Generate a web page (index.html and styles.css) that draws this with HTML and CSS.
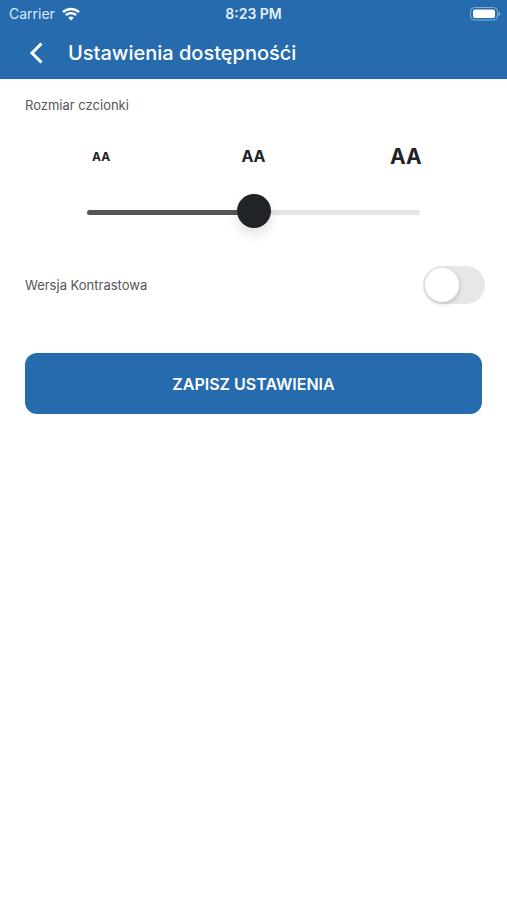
FILE: index.html
```html
<!DOCTYPE html>
<html lang="pl">

<head>
    <meta charset="utf-8">
    <meta name="viewport" content="width=device-width, initial-scale=1">
    <title>Ustawienia dostępnośći</title>
    <link rel="stylesheet" href="styles.css">
</head>

<body>

    <header class="header">
        <!-- Status bar -->
        <div class="status-bar">
            <div class="carrier">
                <span>Carrier</span>
                <svg class="wifi" viewBox="0 0 18 14" aria-hidden="true">
                    <path d="M1 5.2a11.5 11.5 0 0 1 16 0" />
                    <path d="M3.9 8.2a7.3 7.3 0 0 1 10.2 0" />
                    <path class="wifi-dot" d="M9 13.6L6.2 10.8a4 4 0 0 1 5.6 0z" />
                </svg>
            </div>
            <span class="clock">8:23 PM</span>
            <svg class="battery" viewBox="0 0 32 14" aria-hidden="true">
                <rect class="battery-frame" x="1.5" y="0.5" width="27" height="12.5" rx="4" />
                <rect class="battery-level" x="4" y="2.5" width="22" height="8.5" rx="2" />
                <path class="battery-tip" d="M29.5 4.8c2.4.8 2.4 3.4 0 4.2z" />
            </svg>
        </div>

        <!-- Title -->
        <div class="nav-bar">
            <button class="back-button" type="button" aria-label="Wstecz">
                <svg viewBox="0 0 14 22" aria-hidden="true">
                    <path d="M12.5 1.5L3 11l9.500 9.500" />
                </svg>
            </button>
            <h1>Ustawienia dostępnośći</h1>
        </div>
    </header>

    <main>
        <form class="settings">
            <!-- Font size -->
            <label class="setting-label" for="font-size">Rozmiar czcionki</label>
            <div class="sizes" aria-hidden="true">
                <span class="size-small">AA</span>
                <span class="size-medium">AA</span>
                <span class="size-large">AA</span>
            </div>
            <input class="slider" id="font-size" type="range" min="0" max="2" step="1" value="1">

            <!-- Contrast version -->
            <div class="contrast-row">
                <label class="setting-label" for="contrast">Wersja Kontrastowa</label>
                <input class="switch" id="contrast" type="checkbox" role="switch">
            </div>

            <button class="save-button" type="button">ZAPISZ USTAWIENIA</button>
        </form>
    </main>

    <script>
        // Keep the dark part of the track under the thumb
        const slider = document.getElementById('font-size');
        slider.addEventListener('input', function () {
            slider.style.setProperty('--fill', (slider.value / slider.max * 100) + '%');
        });
    </script>

</body>

</html>
```

FILE: styles.css
```css
* {
    box-sizing: border-box;
}

body {
    margin: 0;
    background: #fff;
    color: #202327;
    font-family: Inter, "Liberation Sans", sans-serif;
}

/* Header */
.header {
    background: #256bad;
    color: #fff;
}

.status-bar {
    display: grid;
    grid-template-columns: 1fr auto 1fr;
    align-items: center;
    height: 27px;
    padding: 0 6px;
    font-size: 14px;
}

.carrier {
    display: flex;
    align-items: center;
    gap: 7px;
    padding-left: 3px;
    color: #dceafa;
}

.wifi {
    width: 18px;
    height: 14px;
    fill: none;
    stroke: #fff;
    stroke-width: 2.4;
}

.wifi-dot {
    fill: #fff;
    stroke: none;
}

.clock {
    font-weight: 600;
    color: #e6f1fc;
}

.battery {
    justify-self: end;
    width: 32px;
    height: 14px;
}

.battery-frame {
    fill: none;
    stroke: #86afd7;
}

.battery-level {
    fill: #fff;
}

.battery-tip {
    fill: #86afd7;
}

.nav-bar {
    display: flex;
    align-items: center;
    gap: 16px;
    height: 52px;
    padding: 0 20px;
}

.back-button {
    display: flex;
    align-items: center;
    justify-content: center;
    width: 32px;
    height: 40px;
    padding: 0;
    border: none;
    background: none;
    cursor: pointer;
}

.back-button svg {
    width: 14px;
    height: 22px;
    fill: none;
    stroke: #fff;
    stroke-width: 3;
}

h1 {
    margin: 0;
    font-size: 20px;
    font-weight: 500;
    line-height: 24px;
}

/* Settings */
.settings {
    display: flex;
    flex-direction: column;
    padding: 16px 25px;
}

.setting-label {
    font-size: 13px;
    line-height: 20px;
    color: #555;
}

.sizes {
    display: grid;
    grid-template-columns: repeat(3, 1fr);
    align-items: center;
    height: 32px;
    margin-top: 25px;
    text-align: center;
    font-weight: 700;
}

.size-small {
    font-size: 12px;
}

.size-medium {
    font-size: 16px;
}

.size-large {
    font-size: 21px;
}

.slider {
    --fill: 50%;
    appearance: none;
    height: 34px;
    margin: 23px 62px 0;
    background: none;
    cursor: pointer;
}

.slider::-webkit-slider-runnable-track {
    height: 5px;
    border-radius: 3px;
    background: linear-gradient(to right, #555 var(--fill), #e4e4e4 var(--fill));
}

.slider::-webkit-slider-thumb {
    appearance: none;
    width: 34px;
    height: 34px;
    margin-top: -16px;
    border-radius: 50%;
    background: #202327;
    box-shadow: 0 6px 12px rgba(0, 0, 0, 0.12);
}

.contrast-row {
    display: flex;
    align-items: center;
    justify-content: space-between;
    margin: 37px -3px 0 0;
}

.switch {
    appearance: none;
    width: 62px;
    height: 38px;
    margin: 0;
    padding: 2px;
    border-radius: 19px;
    background: #e7e7ea;
    cursor: pointer;
}

.switch::before {
    content: "";
    display: block;
    width: 34px;
    height: 34px;
    border-radius: 50%;
    background: #fff;
    box-shadow: 1px 2px 5px rgba(0, 0, 0, 0.16);
}

.switch:checked {
    background: #256bad;
}

.switch:checked::before {
    margin-left: auto;
}

.save-button {
    height: 61px;
    margin-top: 49px;
    border: none;
    border-radius: 12px;
    background: #256bad;
    color: #fff;
    font-family: inherit;
    font-size: 16px;
    font-weight: 600;
    cursor: pointer;
}
```
